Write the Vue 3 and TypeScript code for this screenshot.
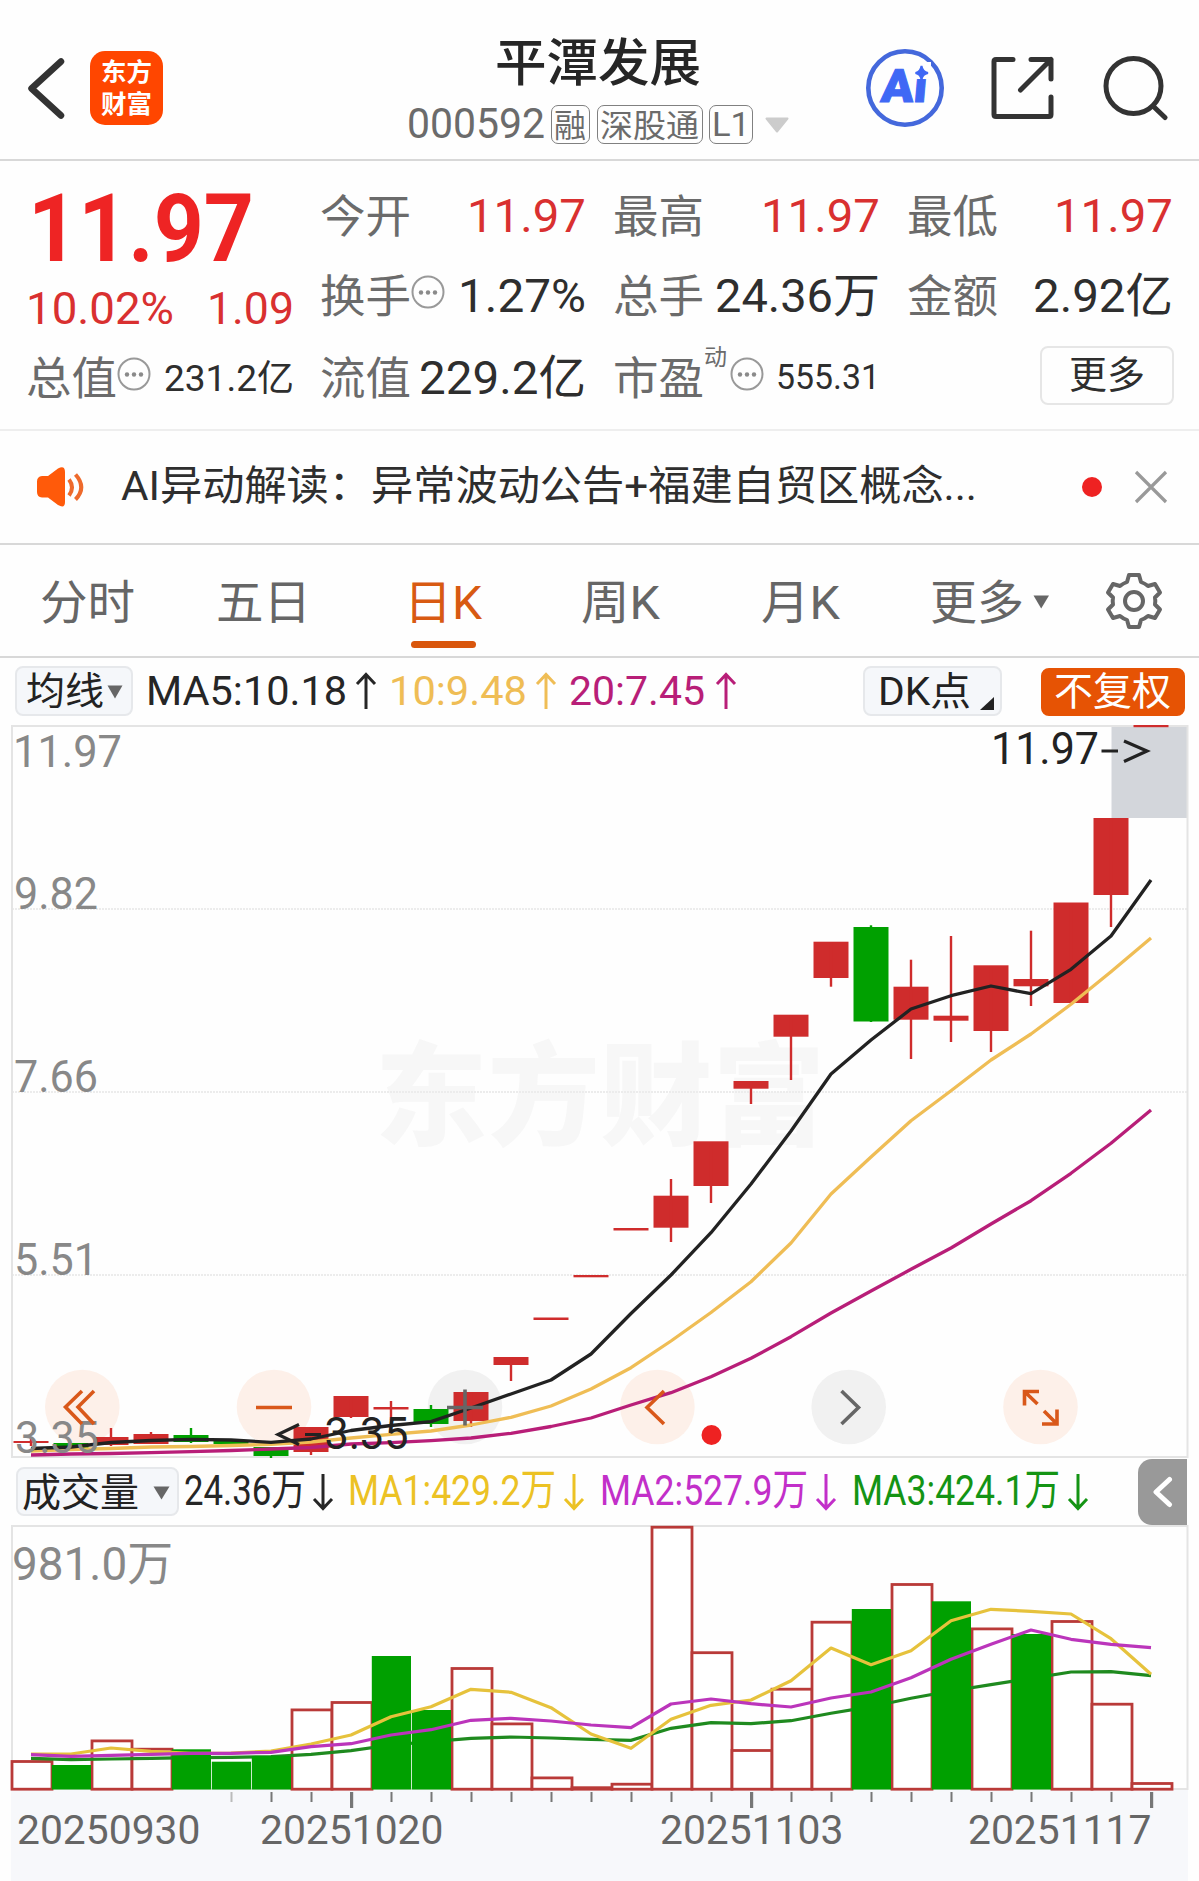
<script setup lang="ts">
import { h } from 'vue'

/* A line of text set to an exact advance width; the bottom of its box is the baseline. */
interface FitProps { t: string; w: number; s: number; b?: number }
const Fit = (p: FitProps) =>
  h('svg', { width: p.w, height: Math.round(p.s * 0.71), style: { overflow: 'visible', display: 'block', flex: 'none' } }, [
    h('text', {
      x: 0, y: Math.round(p.s * 0.71), 'font-size': p.s, 'font-weight': p.b ?? 400,
      textLength: p.w, lengthAdjust: 'spacingAndGlyphs', fill: 'currentColor',
    }, p.t),
  ])
Fit.props = ['t', 'w', 's', 'b']

const Info = () =>
  h('svg', { width: 34, height: 34, viewBox: '0 0 34 34', style: { display: 'block', flex: 'none' } }, [
    h('circle', { cx: 17, cy: 17, r: 15.5, fill: 'none', stroke: '#999', 'stroke-width': 2 }),
    ...[10, 17, 24].map((cx) => h('circle', { cx, cy: 17.5, r: 2.2, fill: '#8a8a8a' })),
  ])

const Arrow = (p: { down?: boolean }) =>
  h('svg', { width: 22, height: 38, viewBox: '0 0 22 38', style: { display: 'block', flex: 'none' } }, [
    h('path', {
      d: p.down ? 'M11 1V35M2 26L11 35.5L20 26' : 'M11 37V3M2 12L11 2.5L20 12',
      fill: 'none', stroke: 'currentColor', 'stroke-width': 3,
    }),
  ])
Arrow.props = { down: Boolean }

const RED = '#cf2c2c'
const GREEN = '#00a000'
const cx = (i: number) => 31 + 40 * i

type Candle = [top: number, bottom: number, high: number, low: number, up: boolean]
const candles: Candle[] = [
  [1441, 1443, 1438, 1446, true], [1443, 1448, 1443, 1448, false], [1437, 1445, 1428, 1446, true],
  [1434, 1444, 1432, 1444, true], [1435, 1442, 1428, 1443, false], [1440, 1444, 1440, 1444, false],
  [1447, 1456, 1447, 1458, false], [1427, 1452, 1427, 1455, true], [1396, 1417, 1396, 1418, true],
  [1407, 1409.5, 1401, 1420, true], [1409, 1424, 1405, 1427, false], [1392, 1421, 1392, 1427, true],
  [1357, 1365, 1357, 1381, true], [1317.5, 1320, 1318, 1320, true], [1275, 1277.3, 1275, 1277, true],
  [1228, 1230.5, 1228, 1230, true], [1195.7, 1227.7, 1179, 1242, true], [1141.3, 1186, 1142, 1203, true],
  [1081, 1088.7, 1081, 1104, true], [1014.7, 1036.7, 1015, 1080, true], [941.7, 978, 942, 986.7, true],
  [927, 1021.5, 925.3, 1022, false], [986.7, 1019.7, 959.7, 1059, true], [1015.7, 1020.7, 936, 1042, true],
  [965.3, 1031, 966, 1052, true], [979, 986.3, 930.7, 1006, true], [902.5, 1003, 903, 1003, true],
  [818, 895, 818, 927, true], [725, 727.2, 725, 727, true],
]

const line = (ys: number[]) => ys.map((y, i) => `${cx(i)},${y}`).join(' ')
const ma5 = line([1448.5, 1447, 1442.5, 1440.5, 1439.3, 1440, 1442.3, 1439, 1430.5, 1425.5, 1421.6, 1408, 1394, 1380, 1354, 1313.5, 1275, 1232.7, 1184, 1131, 1074, 1040, 1009, 995.7, 986, 993.7, 969.3, 936, 880])
const ma10 = line([1451, 1449.5, 1448.5, 1447, 1446.5, 1445.5, 1444.3, 1442, 1438, 1434.3, 1431, 1425, 1417.3, 1406, 1389, 1367.7, 1341, 1312.5, 1281.7, 1243, 1194, 1157, 1120.7, 1090.7, 1060, 1034, 1004.3, 971.7, 938])
const ma20 = line([1455, 1454, 1453.5, 1452.7, 1451.7, 1450.5, 1449, 1447.5, 1444, 1442.7, 1440.7, 1438, 1433.3, 1426.5, 1418, 1405, 1392.7, 1376.7, 1358.3, 1336.7, 1313, 1291, 1269.3, 1248, 1224, 1200.7, 1173.3, 1143.3, 1110])

const volTops = [1760.3, 1765, 1739.7, 1748, 1749.3, 1761.7, 1756, 1708.7, 1701.3, 1656, 1710, 1667.3, 1722.7, 1776.7, 1786.5, 1783, 1526, 1651.5, 1749.3, 1688, 1621, 1609, 1583.3, 1601.3, 1627.7, 1634, 1620.3, 1703, 1782.3]
const volDown = new Set([1, 4, 5, 6, 9, 10, 21, 23, 25])
const volBars = volTops.map((y, i) => ({ x: 11.5 + 40 * i, y, down: volDown.has(i) }))
const v1 = line([1754, 1754, 1748, 1751.3, 1753.3, 1753, 1751, 1744, 1735, 1716.7, 1706.7, 1689.3, 1692.3, 1707.7, 1734, 1748.3, 1719.3, 1705.3, 1700, 1680.7, 1648, 1664.7, 1650.7, 1620.7, 1609.3, 1611.3, 1614, 1638.7, 1674.3])
const v2 = line([1754.7, 1756.3, 1755.3, 1754.3, 1753.3, 1753.3, 1752.3, 1746.7, 1743.7, 1735, 1729.7, 1720.3, 1718.3, 1721, 1725, 1727.7, 1704, 1699, 1703.7, 1707, 1698, 1692, 1677.7, 1659.3, 1644.3, 1630, 1639.3, 1644.3, 1647.7])
const v3 = line([1758.3, 1759.7, 1759, 1758.3, 1757.7, 1757.3, 1756.7, 1754.3, 1750.7, 1745, 1741.7, 1738.3, 1737, 1738, 1739.3, 1740.3, 1728.3, 1722.7, 1723.7, 1720.7, 1713.3, 1706.7, 1698.3, 1691, 1684.7, 1678.3, 1672, 1671.7, 1675.7])

const ticks = Array.from({ length: 24 }, (_, k) => {
  const i = k + 5
  return { x: cx(i) + 0.5, major: i % 10 === 8, faint: i === 5 }
})
const priceLabels = [
  { t: '11.97', y: 767, w: 109, x: 13 }, { t: '9.82', y: 909, w: 84, x: 14 }, { t: '7.66', y: 1092, w: 84, x: 14 },
  { t: '5.51', y: 1275, w: 84, x: 14 }, { t: '3.35', y: 1453, w: 84, x: 15 },
]
const dates = [
  { t: '20250930', x: 17 }, { t: '20251020', x: 260 }, { t: '20251103', x: 660 }, { t: '20251117', x: 968 },
]
const pads = [82.3, 274, 465, 657.4, 848.7, 1040.5].map((x, i) => ({ x, gray: i === 2 || i === 4 }))
</script>

<template>
  <div class="page">
    <header class="head">
      <div class="head-left">
        <svg width="40" height="62" viewBox="0 0 40 62"><path d="M35 4.500L5.500 31.500L35 58.500" fill="none" stroke="#333" stroke-width="6.500" stroke-linecap="round" stroke-linejoin="round" /></svg>
        <div class="logo"><span>东方</span><span>财富</span></div>
      </div>
      <div class="head-mid">
        <Fit t="平潭发展" :w="206" :s="51" :b="500" class="title" />
        <div class="code">
          <Fit t="000592" :w="138" :s="42" />
          <div class="tag t1"><Fit t="融" :w="32" :s="32" /></div>
          <div class="tag t2"><Fit t="深股通" :w="99" :s="32" /></div>
          <div class="tag t3"><Fit t="L1" :w="38" :s="34" /></div>
          <svg class="caret" width="24" height="16"><path d="M1.500 1.500H22.500L12 14.500Z" fill="#ccc" stroke="#ccc" stroke-width="2" stroke-linejoin="round" /></svg>
        </div>
      </div>
      <div class="head-right">
        <svg width="80" height="80" viewBox="865 48 80 80">
          <circle cx="905" cy="88" r="36.700" fill="none" stroke="#4468dc" stroke-width="4.600" />
          <g class="ai" transform="translate(880 102) skewX(-5)"><text x="0" y="0" textLength="46" lengthAdjust="spacingAndGlyphs">Ai</text></g>
          <rect x="913" y="62" width="18" height="17" fill="#fefefe" />
          <path d="M921.500 66Q922.500 72 928 73Q922.500 74 921.500 79.500Q920.500 74 915.500 73Q920.500 72 921.500 66Z" fill="#3f68f5" stroke="#3f68f5" stroke-width="2" />
        </svg>
        <svg width="64" height="64" viewBox="990 56 64 64" fill="none" stroke="#333" stroke-width="5" stroke-linecap="round" stroke-linejoin="round">
          <path d="M1013 59.500H996Q994 59.500 994 61.500V114.500Q994 116.500 996 116.500H1049Q1051 116.500 1051 114.500V97M1031 59.500H1051V79M1051 59.500L1020.500 90" />
        </svg>
        <svg width="66" height="66" viewBox="1103 54 66 66" fill="none" stroke="#333" stroke-width="5" stroke-linecap="round">
          <circle cx="1133.500" cy="85" r="27.500" /><path d="M1153 105L1165 116.500" />
        </svg>
      </div>
    </header>

    <section class="quote">
      <div class="col c1">
        <div class="row big red2"><Fit t="11.97" :w="226" :s="94" :b="700" /></div>
        <div class="row pct red"><Fit t="10.02%" :w="148" :s="44" /><Fit t="1.09" :w="87" :s="44" /></div>
        <div class="row"><div class="lab"><Fit t="总值" :w="91" :s="45" /><Info class="info" /></div><Fit t="231.2亿" :w="130" :s="36" class="up3" /></div>
      </div>
      <div class="col c2">
        <div class="row"><div class="lab"><Fit t="今开" :w="91" :s="45" /></div><Fit t="11.97" :w="119" :s="47" class="red" /></div>
        <div class="row"><div class="lab"><Fit t="换手" :w="91" :s="45" /><Info class="info" /></div><Fit t="1.27%" :w="128" :s="47" /></div>
        <div class="row"><div class="lab"><Fit t="流值" :w="91" :s="45" /></div><Fit t="229.2亿" :w="167" :s="47" /></div>
      </div>
      <div class="col c3">
        <div class="row"><div class="lab"><Fit t="最高" :w="91" :s="45" /></div><Fit t="11.97" :w="119" :s="47" class="red" /></div>
        <div class="row"><div class="lab"><Fit t="总手" :w="91" :s="45" /></div><Fit t="24.36万" :w="165" :s="47" /></div>
        <div class="row"><div class="lab"><Fit t="市盈" :w="91" :s="45" /><Fit t="动" :w="23" :s="23" class="sup" /><Info class="info pe" /></div><Fit t="555.31" :w="104" :s="35" class="up5" /></div>
      </div>
      <div class="col c4">
        <div class="row"><div class="lab"><Fit t="最低" :w="91" :s="45" /></div><Fit t="11.97" :w="119" :s="47" class="red" /></div>
        <div class="row"><div class="lab"><Fit t="金额" :w="91" :s="45" /></div><Fit t="2.92亿" :w="140" :s="47" /></div>
        <div class="more"><Fit t="更多" :w="76" :s="38" /></div>
      </div>
    </section>

    <section class="notice">
      <svg width="50" height="42" viewBox="36 465 50 42">
        <path d="M42 475H48L58 467.500Q65 464 65 471V501Q65 508 58 504L48 496.500H42Q37 496 37 491V480.500Q37 475.500 42 475Z" fill="#ff5a0a" />
        <path d="M69 478.500Q75 486.500 69 494.500M75.500 473.500Q87 486.500 75.500 498.500" fill="none" stroke="#ee6a2c" stroke-width="4" />
      </svg>
      <Fit class="msg" t="AI异动解读：异常波动公告+福建自贸区概念..." :w="856" :s="41" />
      <i class="dot"></i>
      <svg class="close" width="34" height="34"><path d="M2 2L32 32M32 2L2 32" stroke="#999" stroke-width="3.200" /></svg>
    </section>

    <nav class="tabs">
      <div class="tab"><Fit t="分时" :w="95" :s="47" /></div>
      <div class="tab"><Fit t="五日" :w="95" :s="47" /></div>
      <div class="tab on"><Fit t="日K" :w="78" :s="47" /></div>
      <div class="tab"><Fit t="周K" :w="79" :s="47" /></div>
      <div class="tab"><Fit t="月K" :w="79" :s="47" /></div>
      <div class="tab last">
        <Fit t="更多" :w="94" :s="47" />
        <svg class="tri" width="17" height="14"><path d="M0.500 0.500H16L8.200 13.500Z" fill="#666" /></svg>
        <svg class="gear" width="58" height="58" viewBox="-29 -29 58 58" fill="none" stroke="#666" stroke-width="4" stroke-linejoin="round">
          <path d="M-5 -26H5L7 -19Q11 -17.500 14 -15L21 -17L26 -8.500L21 -3.500Q21.600 0 21 3.500L26 8.500L21 17L14 15Q11 17.500 7 19L5 26H-5L-7 19Q-11 17.500 -14 15L-21 17L-26 8.500L-21 3.500Q-21.600 0 -21 -3.500L-26 -8.500L-21 -17L-14 -15Q-11 -17.500 -7 -19Z" />
          <circle r="9" />
        </svg>
      </div>
    </nav>

    <section class="ma">
      <div class="btn b1"><Fit t="均线" :w="78" :s="38" /><svg width="16" height="14"><path d="M0.500 0.500H15.500L8 13.500Z" fill="#666" /></svg></div>
      <div class="vals">
        <Fit t="MA5:10.18" :w="201" :s="40" /><Arrow class="au" />
        <Fit t="10:9.48" :w="138" :s="40" class="y" /><Arrow class="au y" />
        <Fit t="20:7.45" :w="136" :s="40" class="m" /><Arrow class="au m" />
      </div>
      <div class="btn b2"><Fit t="DK点" :w="93" :s="39" /><svg width="14" height="14"><path d="M14 0V13H0Z" fill="#222" /></svg></div>
      <div class="btn b3"><Fit t="不复权" :w="117" :s="39" /></div>
    </section>

    <svg class="chart" width="1199" height="733" viewBox="0 725 1199 733">
      <g class="mark"><text x="375" y="1137" textLength="450" lengthAdjust="spacing">东方财富</text></g>
      <g stroke="#ececec" stroke-width="2" stroke-dasharray="2 1"><path d="M12 909H1187M12 1092H1187M12 1275H1187" /></g>
      <path d="M1111.500 727H1188V818H1111.500Z" fill="#d3d6db" />
      <path d="M12 726H1187.500V1457H12Z" fill="none" stroke="#e4e4e4" stroke-width="2" />
      <circle v-for="p in pads" :key="p.x" :cx="p.x" cy="1407" r="37.300" :fill="p.gray ? '#f1f1f1' : '#fdf0e9'" />
      <g v-for="(c, i) in candles" :key="i" :fill="c[4] ? RED : GREEN">
        <rect :x="cx(i) - 17.500" :y="c[0]" width="35" :height="c[1] - c[0]" />
        <rect :x="cx(i) - 1.200" :y="c[2]" width="2.400" :height="c[3] - c[2]" />
      </g>
      <g fill="none" stroke-width="3.300" stroke-linejoin="round">
        <polyline :points="ma20" stroke="#b81e78" /><polyline :points="ma10" stroke="#efbd55" /><polyline :points="ma5" stroke="#222" />
      </g>
      <g fill="#888" font-size="44"><text v-for="l in priceLabels" :key="l.t" :x="l.x" :y="l.y" :textLength="l.w" lengthAdjust="spacingAndGlyphs">{{ l.t }}</text></g>
      <g fill="#222" font-size="44">
        <text x="991" y="764" textLength="108" lengthAdjust="spacingAndGlyphs">11.97</text>
        <text x="324.500" y="1448.500" textLength="84" lengthAdjust="spacingAndGlyphs">3.35</text>
      </g>
      <path d="M1101.500 751H1118M1124 741L1147 751L1124 761.500M299 1424.500L278 1434.500L299 1444.500M305 1434.500H321" fill="none" stroke="#222" stroke-width="3.200" />
      <g fill="none" stroke="#d9581a" stroke-width="3.600">
        <path d="M82 1391L65.500 1407L82 1424M94 1391L78 1407L94 1424M256 1407.500H292M664 1391L647 1407.500L664 1424" />
        <path d="M1039 1391.500H1024.500V1405.500M1024.500 1391.500L1037.500 1404M1042 1424H1057V1409.500M1057 1424L1044 1411" />
      </g>
      <path d="M447 1407.500H483M465 1389.500V1425.500M841.500 1391L858.500 1407.500L841.500 1424" fill="none" stroke="#666" stroke-width="3.600" />
      <circle cx="711.500" cy="1435" r="10" fill="#ee2222" />
    </svg>

    <section class="vol">
      <div class="btn b4"><Fit t="成交量" :w="117" :s="39" /><svg width="17" height="14"><path d="M0.500 0.500H16.500L8.500 13.500Z" fill="#666" /></svg></div>
      <div class="vals v">
        <Fit t="24.36万" :w="122" :s="43" /><Arrow down class="ad" />
        <Fit t="MA1:429.2万" :w="208" :s="43" class="vy" /><Arrow down class="ad vy" />
        <Fit t="MA2:527.9万" :w="208" :s="43" class="vm" /><Arrow down class="ad vm" />
        <Fit t="MA3:424.1万" :w="208" :s="43" class="vg" /><Arrow down class="ad vg" />
      </div>
      <div class="side"><svg width="22" height="32"><path d="M17.500 3.500L4 16L17.500 28.500" fill="none" stroke="#fff" stroke-width="5" stroke-linecap="round" stroke-linejoin="round" /></svg></div>
    </section>

    <svg class="chart" width="1199" height="356" viewBox="0 1525 1199 356">
      <rect x="11" y="1790" width="1177" height="91" fill="#f7f8fb" />
      <path d="M12 1526H1187.500V1789H12Z" fill="none" stroke="#e4e4e4" stroke-width="2" />
      <text x="12" y="1580" font-size="47" fill="#888" textLength="161" lengthAdjust="spacingAndGlyphs">981.0万</text>
      <g v-for="b in volBars" :key="b.x">
        <rect v-if="!b.down" :x="b.x + 0.500" :y="b.y + 1.200" width="40" :height="1788 - b.y" fill="#fff" stroke="#b93a38" stroke-width="2.800" />
      </g>
      <polyline :points="v3" fill="none" stroke="#1f8a1f" stroke-width="3.200" />
      <g v-for="b in volBars" :key="b.x">
        <rect v-if="b.down" :x="b.x + 0.300" :y="b.y" width="39.200" :height="1789.500 - b.y" :fill="GREEN" />
      </g>
      <g fill="none" stroke-width="3.200" stroke-linejoin="round">
        <polyline :points="v1" stroke="#e6c23c" /><polyline :points="v2" stroke="#bb35bb" />
      </g>
      <rect v-for="t in ticks" :key="t.x" :x="t.x - (t.major ? 1.500 : 1)" y="1792" :width="t.major ? 3.200 : 2" :height="t.major ? 16 : 10" :fill="t.faint ? '#bbb' : '#777'" />
      <g fill="#666" font-size="41"><text v-for="d in dates" :key="d.t" :x="d.x" y="1843.500" textLength="183.500" lengthAdjust="spacingAndGlyphs">{{ d.t }}</text></g>
    </svg>
  </div>
</template>

<style>
body { background: #fff; }
</style>

<style scoped>
.page { width: 1199px; height: 1881px; overflow: hidden; background: #fefefe; color: #2e2e2e; font-family: Roboto, "Noto Sans CJK SC", sans-serif; }
.page > * { box-sizing: border-box; }
svg { display: block; flex: none; }
.head { height: 161px; border-bottom: 2px solid #d8d8d8; display: grid; grid-template-columns: 1fr auto 1fr; }
.head-left { display: flex; align-items: flex-start; padding: 57px 0 0 26px; }
.logo { box-sizing: border-box; width: 73px; height: 74px; margin: -6px 0 0 24px; padding-bottom: 4px; border-radius: 15px; background: #ff4600; color: #fff; display: flex; flex-direction: column; align-items: center; justify-content: center; font: 700 25.500px/32px "Noto Sans CJK SC", sans-serif; }
.head-mid { display: flex; flex-direction: column; align-items: center; padding: 45px 4px 0 0; }
.title { color: #262626; }
.code { display: flex; height: 39px; margin-top: 24px; align-items: flex-start; color: #6b6b6b; }
.code > svg:first-child { margin-top: 3px; }
.tag { box-sizing: border-box; height: 39px; border: 1.5px solid #808080; border-radius: 7px; display: flex; justify-content: center; padding-top: 8px; color: #6b6b6b; }
.t1 { width: 39px; margin-left: 6px; }
.t2 { width: 106px; margin-left: 7px; }
.t3 { width: 44px; margin-left: 6px; padding-top: 6px; }
.caret { margin: 12px 0 0 12px; }
.head-right { display: flex; justify-content: flex-end; align-items: center; padding: 16px 30px 0 0; }
.head-right svg + svg { margin-left: 45px; }
.head-right svg:last-child { margin-left: 49px; }
.ai { font: 900 46px Roboto, sans-serif; fill: #3f68f5; stroke: #3f68f5; stroke-width: 1; }
.quote { height: 270px; display: flex; padding-left: 26px; border-bottom: 2px solid #eee; }
.col { display: flex; flex-direction: column; }
.c1 { width: 268px; }
.c2 { width: 266px; margin-left: 26px; }
.c3 { width: 267px; margin-left: 27px; }
.c4 { width: 266px; margin-left: 27px; }
.row { display: flex; justify-content: space-between; align-items: flex-end; height: 80px; }
.row:first-child { height: 71px; }
.row:last-child { height: 82px; }
.c1 .big { height: 100px; }
.c1 .pct { height: 63px; }
.c1 .row:last-child { height: 70px; }
.big { padding-left: 2px; }
.lab { display: flex; align-items: flex-end; color: #6b6b6b; margin-bottom: -1px; }
.info { margin-bottom: 4px; margin-left: 0; }
.pe { margin-left: 3px; }
.sup { margin: 0 0 30px 0; }
.up3 { margin-bottom: 3px; }
.up5 { margin-bottom: 5px; }
.red { color: #d93030; }
.red2 { color: #ee2424; }
.more { box-sizing: border-box; width: 134px; height: 59px; margin: 34px 0 0 133px; border: 2px solid #e6e6e6; border-radius: 8px; display: flex; justify-content: center; align-items: center; padding-bottom: 3px; }
.notice { height: 114px; border-bottom: 2px solid #d8d8d8; display: flex; align-items: center; padding-left: 36px; }
.msg { margin: -3px 0 0 35px; }
.dot { width: 20px; height: 20px; border-radius: 50%; background: #ee2222; margin-left: 105px; }
.close { margin-left: 32px; }
.tabs { height: 113px; border-bottom: 2px solid #d8d8d8; display: grid; grid-template-columns: 175px 176px 188px 162px 199px 1fr; color: #666; }
.tab { display: flex; justify-content: center; padding-top: 41px; position: relative; }
.on { color: #d85a12; }
.on > svg { margin-right: 4px; }
.on::after { content: ""; position: absolute; left: 60px; bottom: 8px; width: 65px; height: 7px; border-radius: 4px; background: #d9560c; }
.last { justify-content: flex-start; padding-left: 30px; }
.tri { margin: 9px 0 0 9px; }
.gear { margin: -14px 0 0 55px; }
.ma { height: 67px; display: flex; padding: 8px 0 0 15px; }
.btn { box-sizing: border-box; border: 2px solid #e6e8eb; background: #f5f7fa; border-radius: 8px; display: flex; color: #222; height: 50px; }
.b1 { width: 118px; padding: 9px 0 0 9px; }
.b1 svg + svg { margin: 8px 0 0 3px; }
.vals { display: flex; align-items: flex-end; height: 39px; width: 730px; padding-left: 13px; color: #262626; }
.au { margin: 0 12px -5px 8px; }
.au.m { margin-left: 10px; }
.y { color: #efbd55; }
.m { color: #b81e78; }
.b2 { width: 139px; padding: 9px 0 0 13px; margin-left: -13px; }
.b2 svg + svg { margin: 20px 0 0 9px; }
.b3 { width: 144px; margin: 2px 0 0 39px; padding: 7px 0 0 11px; background: #e65304; border-color: #e65304; color: #fff; height: 48px; }
.mark { font: 900 112px "Noto Sans CJK SC", sans-serif; fill: #f7f7f7; }
.vol { height: 67px; display: flex; padding: 9px 0 0 16px; }
.b4 { width: 163px; padding: 9px 0 0 4px; height: 49px; }
.b4 svg + svg { margin: 8px 0 0 14px; }
.v { width: 953px; height: 38px; padding-left: 5px; margin-right: 2px; box-sizing: border-box; }
.ad { margin: 0 15px -6px 7px; }
.v .ad:nth-child(2) { margin: 0 14px -6px 6px; }
.vy { color: #ecc224; }
.vm { color: #c22fc9; }
.vg { color: #149414; }
.side { width: 49px; height: 66px; margin: -8px 0 0 4px; border-radius: 14px 0 0 14px; background: #999; display: flex; align-items: center; justify-content: center; }
</style>
